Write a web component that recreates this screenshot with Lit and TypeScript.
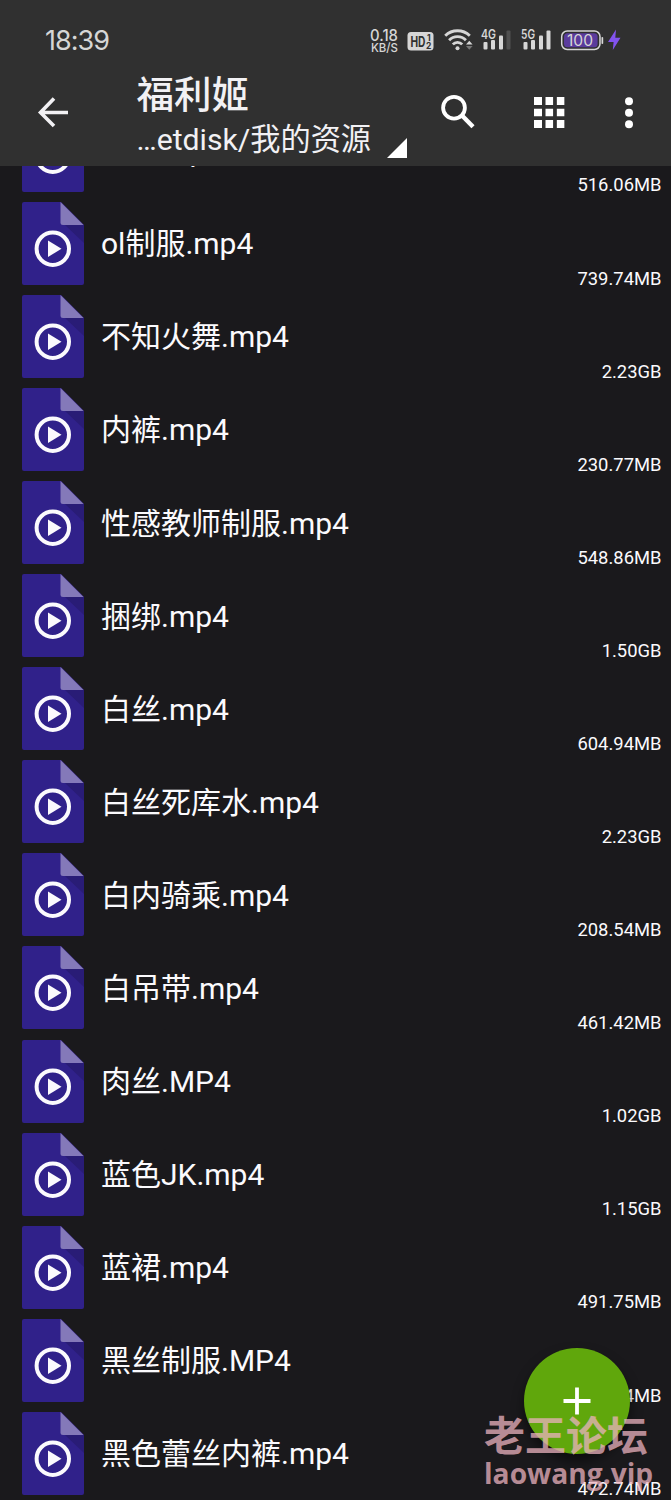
import { LitElement, html, css } from "lit";
import { customElement, property } from "lit/decorators.js";

const FILES: [string, string][] = [
  ["ol服.mp4", "516.06MB"],
  ["ol制服.mp4", "739.74MB"],
  ["不知火舞.mp4", "2.23GB"],
  ["内裤.mp4", "230.77MB"],
  ["性感教师制服.mp4", "548.86MB"],
  ["捆绑.mp4", "1.50GB"],
  ["白丝.mp4", "604.94MB"],
  ["白丝死库水.mp4", "2.23GB"],
  ["白内骑乘.mp4", "208.54MB"],
  ["白吊带.mp4", "461.42MB"],
  ["肉丝.MP4", "1.02GB"],
  ["蓝色JK.mp4", "1.15GB"],
  ["蓝裙.mp4", "491.75MB"],
  ["黑丝制服.MP4", "512.84MB"],
  ["黑色蕾丝内裤.mp4", "472.74MB"],
];

@customElement("status-bar")
class StatusBar extends LitElement {
  static styles = css`
    :host { display: block; height: 64px; color: #d6d6d6; }
    .bar { display: flex; justify-content: space-between; padding: 24px 49px 0 45px; }
    .time { font: 400 27px/33px Inter, Roboto, sans-serif; letter-spacing: -1px; }
    svg { display: block; }
    .txt { font-family: Inter, Roboto, sans-serif; }
  `;
  render() {
    return html`<div class="bar">
      <div class="time">18:39</div>
      <svg width="252" height="34" viewBox="370 24 252 34" fill="#d6d6d6">
        <g class="txt">
          <text x="370" y="41" font-size="15.5" font-weight="500" textLength="28" lengthAdjust="spacingAndGlyphs">0.18</text>
          <text x="371" y="52" font-size="12.3" font-weight="500" textLength="27" lengthAdjust="spacingAndGlyphs">KB/S</text>
          <rect x="407.5" y="32" width="26" height="18.5" rx="3.5" />
          <text x="410.5" y="46.5" font-size="14" font-weight="700" fill="#303030" textLength="15" lengthAdjust="spacingAndGlyphs">HD</text>
          <text x="427" y="40.6" font-size="8.5" font-weight="700" fill="#303030">1</text>
          <text x="426" y="48.9" font-size="8.5" font-weight="700" fill="#303030">2</text>
          <g fill="none" stroke="#d6d6d6" stroke-width="2.8">
            <path d="M445.2 35.8a17.5 17.5 0 0 1 24.6 0" />
            <path d="M449.1 40.2a11.6 11.6 0 0 1 16.8 0" />
            <path d="M452.8 44.4a6.4 6.4 0 0 1 9.4 0" />
          </g>
          <circle cx="457.5" cy="48.2" r="2" />
          <path d="M466 44.5l3.3-3.8 3.3 3.8z" />
          <path d="M466 46l3.3 3.8 3.3-3.8z" fill="#777" />
          <text x="481" y="38.5" font-size="12.5" font-weight="600" textLength="15" lengthAdjust="spacingAndGlyphs">4G</text>
          <rect x="483.5" y="42" width="4" height="7.5" rx="1" />
          <rect x="491" y="40" width="4" height="9.5" rx="1" />
          <rect x="499" y="35.5" width="4" height="14" rx="1" />
          <rect x="506.5" y="30.5" width="4" height="19" rx="1" fill="#505050" />
          <text x="521" y="38.5" font-size="12.5" font-weight="600" textLength="14" lengthAdjust="spacingAndGlyphs">5G</text>
          <rect x="523.5" y="42" width="4" height="7.5" rx="1" />
          <rect x="531" y="40" width="4" height="9.5" rx="1" />
          <rect x="539" y="35.5" width="4" height="14" rx="1" />
          <rect x="546.5" y="30.5" width="4" height="19" rx="1" />
          <rect x="561.7" y="31" width="38.3" height="18.5" rx="5.5" fill="none" stroke="#d6d6d6" stroke-width="1.5" />
          <rect x="564" y="33.3" width="33.6" height="14" rx="3.5" fill="#5a3b9c" />
          <text x="567" y="46.1" font-size="15.5" textLength="26" lengthAdjust="spacingAndGlyphs">100</text>
          <rect x="601.5" y="37" width="1.7" height="7" rx="0.8" />
          <path d="M616 29.5l-8 12.6h5.6l-.8 7.9 7.7-12.2h-5.2z" fill="#8253ee" />
        </g>
      </svg>
    </div>`;
  }
}

@customElement("file-row")
class FileRow extends LitElement {
  @property() name = "";
  @property() size = "";
  static styles = css`
    :host { display: flex; height: 93.08px; color: #fbfafd; padding: 0 9.5px 0 22px; }
    .icon { flex: none; align-self: center; display: block; }
    .name {
      align-self: center; margin-left: 17px; padding-top: 2px; white-space: nowrap;
      font: 400 30px/40px Roboto, "Noto Sans CJK SC", sans-serif;
    }
    .size { margin-left: auto; align-self: flex-end; font: 400 18.4px/23px Roboto, sans-serif; padding-bottom: 0.3px; white-space: nowrap; }
  `;
  render() {
    return html`
      <svg class="icon" width="62" height="83" viewBox="0 0 62 83">
        <path d="M2 0H39L62 23V81a2 2 0 0 1-2 2H2a2 2 0 0 1-2-2V2a2 2 0 0 1 2-2z" fill="#30218a" />
        <path d="M43 23H62V41z" fill="#291c76" />
        <path d="M38.5 0L61.5 23H41a2.5 2.5 0 0 1-2.5-2.5z" fill="#8479b9" />
        <circle cx="30.8" cy="46.7" r="16.2" fill="none" stroke="#fbfafd" stroke-width="4" />
        <path d="M26 38.5V55L39.5 46.7z" fill="#fbfafd" />
      </svg>
      <div class="name">${this.name}</div>
      <div class="size">${this.size}</div>
    `;
  }
}

@customElement("app-root")
class AppRoot extends LitElement {
  static styles = css`
    :host {
      display: flex; flex-direction: column; position: relative; height: 1500px; overflow: hidden;
      background: #1a191c; font-family: Roboto, "Noto Sans CJK SC", sans-serif; color: #f2f1f4;
    }
    .head { flex: none; height: 165.5px; background: #303030; }
    .tools { display: flex; height: 101px; }
    .tools svg { flex: none; display: block; }
    .titles { width: 270px; margin-left: 67.5px; }
    .title { font: 500 37.5px/44px Roboto, "Noto Sans CJK SC", sans-serif; margin-top: 9px; }
    .path { display: flex; font-size: 30.2px; line-height: 40px; margin-top: 3px; white-space: nowrap; }
    .path svg { margin: 18px 0 0 15.5px; }
    .back { margin: 32px 0 0 37px; }
    .search { margin: 29px 0 0 33.5px; }
    .grid { margin: 33px 0 0 57.5px; }
    .more { margin: 33px 0 0 59.5px; }
    .list { flex: 1; min-height: 0; overflow: hidden; }
    .rows { margin-top: -61.8px; }
    .fab {
      position: absolute; left: 524px; top: 1348px; width: 106px; height: 106px; border-radius: 50%;
      background: #60a70c; box-shadow: 0 7px 12px rgba(0, 0, 0, 0.5);
      display: grid; place-items: center;
    }
    .mark {
      position: absolute; left: 484px; top: 1408px; color: rgba(235, 178, 190, 0.76);
      white-space: nowrap; font-weight: 700;
    }
    .cn { font: 700 41px/50px "Noto Sans CJK SC", sans-serif; }
    .en { font: 700 28.2px/31px "Open Sans", "Noto Sans", sans-serif; }
  `;
  render() {
    return html`
      <div class="head">
        <status-bar></status-bar>
        <div class="tools">
          <svg class="back" width="32" height="32" viewBox="0 0 32 32" fill="none" stroke="#f2f1f4" stroke-width="3.6">
            <path d="M31 16.5H4M17 2.5L3.5 16.5L17 30" />
          </svg>
          <div class="titles">
            <div class="title">福利姬</div>
            <div class="path">
              <span>…etdisk/我的资源</span>
              <svg width="20" height="20" viewBox="0 0 20 20"><path d="M20 0V20H0z" fill="#fff" /></svg>
            </div>
          </div>
          <svg class="search" width="36" height="36" viewBox="0 0 36 36" fill="none" stroke="#fff">
            <circle cx="14" cy="14.7" r="10.9" stroke-width="3.8" />
            <path d="M21.5 22L33 33.8" stroke-width="4.4" />
          </svg>
          <svg class="grid" width="31" height="32" viewBox="0 0 31 32" fill="#fff">
            ${[0, 11.5, 23].map((y) => [0, 11.3, 22.6].map((x) => html`<svg x=${x} y=${y} width="8" height="8" viewBox="0 0 8 8"><path d="M0 0H8V8H0z" /></svg>`))}
          </svg>
          <svg class="more" width="10" height="32" viewBox="0 0 10 32" fill="#fff">
            <circle cx="5" cy="4.2" r="4" /><circle cx="5" cy="15.7" r="4" /><circle cx="5" cy="27.2" r="4" />
          </svg>
        </div>
      </div>
      <div class="list">
        <div class="rows">${FILES.map(([n, s]) => html`<file-row .name=${n} .size=${s}></file-row>`)}</div>
      </div>
      <div class="fab">
        <svg width="28" height="28" viewBox="0 0 28 28"><path d="M14 0.5V27.5M0.5 14H27.5" stroke="#fff" stroke-width="3.8" /></svg>
      </div>
      <div class="mark">
        <div class="cn">老王论坛</div>
        <div class="en">laowang.vip</div>
      </div>
    `;
  }
}
